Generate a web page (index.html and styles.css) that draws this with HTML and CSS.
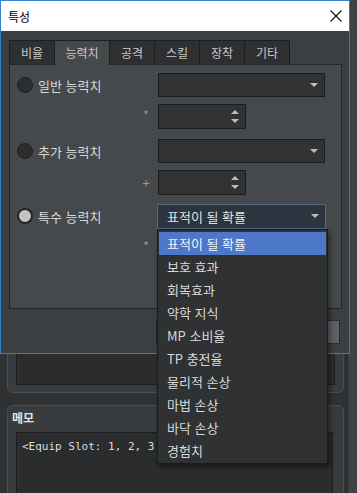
FILE: index.html
```html
<!DOCTYPE html>
<html lang="ko">
<head>
    <meta charset="UTF-8">
    <meta name="viewport" content="width=device-width, initial-scale=1.0">
    <title>특성</title>
    <link rel="stylesheet" href="styles.css">
</head>
<body>
    <div class="app">
        <div class="main">
            <div class="box box-list">
                <div class="field"></div>
            </div>
            <div class="box box-memo">
                <div class="box-title">메모</div>
                <div class="field memo-text">&lt;Equip Slot: 1, 2, 3</div>
            </div>
        </div>
        <div class="side"></div>
    </div>

    <!-- dialog window over the editor -->
    <div class="dialog">
        <div class="titlebar">
            <span>특성</span>
            <svg class="close" width="12" height="12" viewBox="0 0 12 12">
                <path d="M0.5 0.5 L11.5 11.5 M11.5 0.5 L0.5 11.5" stroke="#111" stroke-width="1.1" fill="none"/>
            </svg>
        </div>
        <div class="dlg-body">
            <div class="tabs">
                <div class="tab">비율</div>
                <div class="tab tab-on">능력치</div>
                <div class="tab">공격</div>
                <div class="tab">스킬</div>
                <div class="tab">장착</div>
                <div class="tab">기타</div>
            </div>
            <div class="panel">
                <div class="group">
                    <div class="row row-combo">
                        <div class="lab"><span class="radio"></span>일반 능력치</div>
                        <div class="sym"></div>
                        <div class="combo"><span></span><i class="arrow"></i></div>
                    </div>
                    <div class="row">
                        <div class="lab"></div>
                        <div class="sym star">*</div>
                        <div class="spin"><i class="up"></i><i class="down"></i></div>
                    </div>
                </div>
                <div class="group">
                    <div class="row row-combo">
                        <div class="lab"><span class="radio"></span>추가 능력치</div>
                        <div class="sym"></div>
                        <div class="combo"><span></span><i class="arrow"></i></div>
                    </div>
                    <div class="row">
                        <div class="lab"></div>
                        <div class="sym">+</div>
                        <div class="spin"><i class="up"></i><i class="down"></i></div>
                    </div>
                </div>
                <div class="group group-last">
                    <div class="row row-combo">
                        <div class="lab"><span class="radio radio-on"></span>특수 능력치</div>
                        <div class="sym"></div>
                        <div class="combo combo-open">
                            <span>표적이 될 확률</span><i class="arrow"></i>
                            <ul class="popup">
                                <li class="hl">표적이 될 확률</li>
                                <li>보호 효과</li>
                                <li>회복효과</li>
                                <li>약학 지식</li>
                                <li>MP 소비율</li>
                                <li>TP 충전율</li>
                                <li>물리적 손상</li>
                                <li>마법 손상</li>
                                <li>바닥 손상</li>
                                <li>경험치</li>
                            </ul>
                        </div>
                    </div>
                    <div class="row">
                        <div class="lab"></div>
                        <div class="sym star">*</div>
                        <div class="spin"><i class="up"></i><i class="down"></i></div>
                    </div>
                </div>
            </div>
            <div class="buttons">
                <div class="btn"></div>
                <div class="btn"></div>
            </div>
        </div>
    </div>
</body>
</html>
```

FILE: styles.css
```css
body {
    margin: 0;
    width: 357px;
    height: 493px;
    overflow: hidden;
    background-color: #2f3133;
    color: #d6d6d6;
    font-family: "Noto Sans CJK KR", "Noto Sans", sans-serif;
    font-size: 13px;
}
.app {
    display: grid;
    grid-template-columns: 1fr 10px;
    height: 493px;
    overflow: hidden;
}
.main {
    padding: 0 3px 0 7px;
}
.side {
    background-color: #3f4244;
    border-left: 1px solid #26282a;
}
.box {
    background-color: #393c3e;
    border: 1px solid #4b4e51;
    border-radius: 6px;
    box-sizing: border-box;
}
.box-list {
    margin-top: 290px;
    height: 103px;
    padding: 12px 8px 7px 8px;
    display: flex;
    flex-direction: column;
    justify-content: flex-end;
}
.box-list .field {
    height: 80px;
}
.box-memo {
    margin-top: 12px;
    height: 100px;
    padding: 0 10px 0 8px;
}
.box-title {
    font-size: 12px;
    font-weight: bold;
    color: #e2e2e2;
    height: 26px;
    line-height: 24px;
    margin-left: -4px;
}
.field {
    background-color: #2a2c2e;
    border: 1px solid #1c1d1f;
}
.memo-text {
    height: 70px;
    padding: 7px 5px;
    font-family: "DejaVu Sans Mono", "Liberation Mono", monospace;
    font-size: 11px;
    color: #dcdcdc;
    white-space: nowrap;
    overflow: hidden;
}

/* dialog */
.dialog {
    position: absolute;
    left: 0;
    top: 0;
    width: 348px;
    height: 352px;
    border: 1px solid #2f7fd6;
    background-color: #3c3f41;
}
.titlebar {
    height: 30px;
    background-color: #ffffff;
    color: #000000;
    font-size: 12px;
    display: flex;
    align-items: center;
    justify-content: space-between;
    padding: 0 7px 0 7px;
}
.dlg-body {
    padding: 9px 7px 0 8px;
}
.tabs {
    display: flex;
    height: 24px;
}
.tab {
    width: 46px;
    box-sizing: border-box;
    margin-right: -1px;
    border: 1px solid #1d1e20;
    border-bottom: none;
    background-color: #2d2f31;
    color: #c9c9c9;
    font-size: 12px;
    text-align: center;
    line-height: 23px;
}
.tab:nth-child(2) {
    width: 56px;
}
.tab-on {
    background-color: #46494b;
    position: relative;
    height: 25px;
    z-index: 1;
}
.panel {
    height: 245px;
    box-sizing: border-box;
    border: 1px solid #252628;
    background-color: #46494b;
    padding: 8px 15px 0 7px;
}
.group {
    display: flex;
    flex-direction: column;
    gap: 7px;
    margin-bottom: 10px;
}
.group-last {
    margin-bottom: 0;
}
.row {
    display: flex;
    align-items: center;
    height: 25px;
}
.row-combo {
    height: 24px;
}
.group-last .row-combo {
    margin-top: -1px;
}
.lab {
    width: 123px;
    display: flex;
    align-items: center;
    gap: 5px;
    color: #d8d8d8;
}
.sym {
    width: 12px;
    margin-right: 6px;
    text-align: center;
    color: #9b9b9b;
    font-size: 13px;
}
.star {
    font-size: 12px;
    margin-top: -4px;
}
.radio {
    width: 14px;
    height: 14px;
    border-radius: 50%;
    border: 1px solid #1f2022;
    background-color: #2b2d2f;
}
.radio-on {
    background-color: #c3c3c3;
    border: 2px solid #232527;
    width: 12px;
    height: 12px;
}
.combo {
    width: 167px;
    height: 24px;
    box-sizing: border-box;
    background-color: #303234;
    border: 1px solid #1b1c1d;
    display: flex;
    align-items: center;
    justify-content: space-between;
    padding: 0 6px 0 9px;
    position: relative;
}
.combo-open {
    width: 169px;
    height: 25px;
    margin-left: -1px;
    background-color: #2c3440;
    border-color: #56697f;
    color: #e2e2e2;
}
.arrow {
    width: 0;
    height: 0;
    border-left: 4px solid transparent;
    border-right: 4px solid transparent;
    border-top: 4px solid #bdbdbd;
}
.spin {
    width: 88px;
    height: 25px;
    box-sizing: border-box;
    background-color: #303234;
    border: 1px solid #1b1c1d;
    display: flex;
    flex-direction: column;
    align-items: flex-end;
    justify-content: center;
    gap: 5px;
    padding-right: 6px;
}
.up {
    border-left: 4px solid transparent;
    border-right: 4px solid transparent;
    border-bottom: 4px solid #bdbdbd;
}
.down {
    border-left: 4px solid transparent;
    border-right: 4px solid transparent;
    border-top: 4px solid #bdbdbd;
}
.popup {
    position: absolute;
    left: -1px;
    top: 24px;
    width: 171px;
    box-sizing: border-box;
    margin: 0;
    padding: 2px 0 1px 0;
    list-style: none;
    background-color: #2f3133;
    border: 1px solid #1b1b1c;
    box-shadow: 2px 3px 5px rgba(0, 0, 0, 0.45);
    z-index: 5;
}
.popup li {
    height: 23px;
    line-height: 23px;
    padding-left: 9px;
    color: #d9d9d9;
}
.popup li.hl {
    background-color: #4d78c9;
    color: #eef2fb;
    margin: 0 1px;
    padding-left: 8px;
}
.buttons {
    display: flex;
    justify-content: flex-end;
    gap: 6px;
    margin-top: 11px;
    padding-right: 2px;
}
.btn {
    width: 89px;
    height: 24px;
    box-sizing: border-box;
    background-color: #5d6063;
    border: 1px solid #2a2b2c;
}
```
